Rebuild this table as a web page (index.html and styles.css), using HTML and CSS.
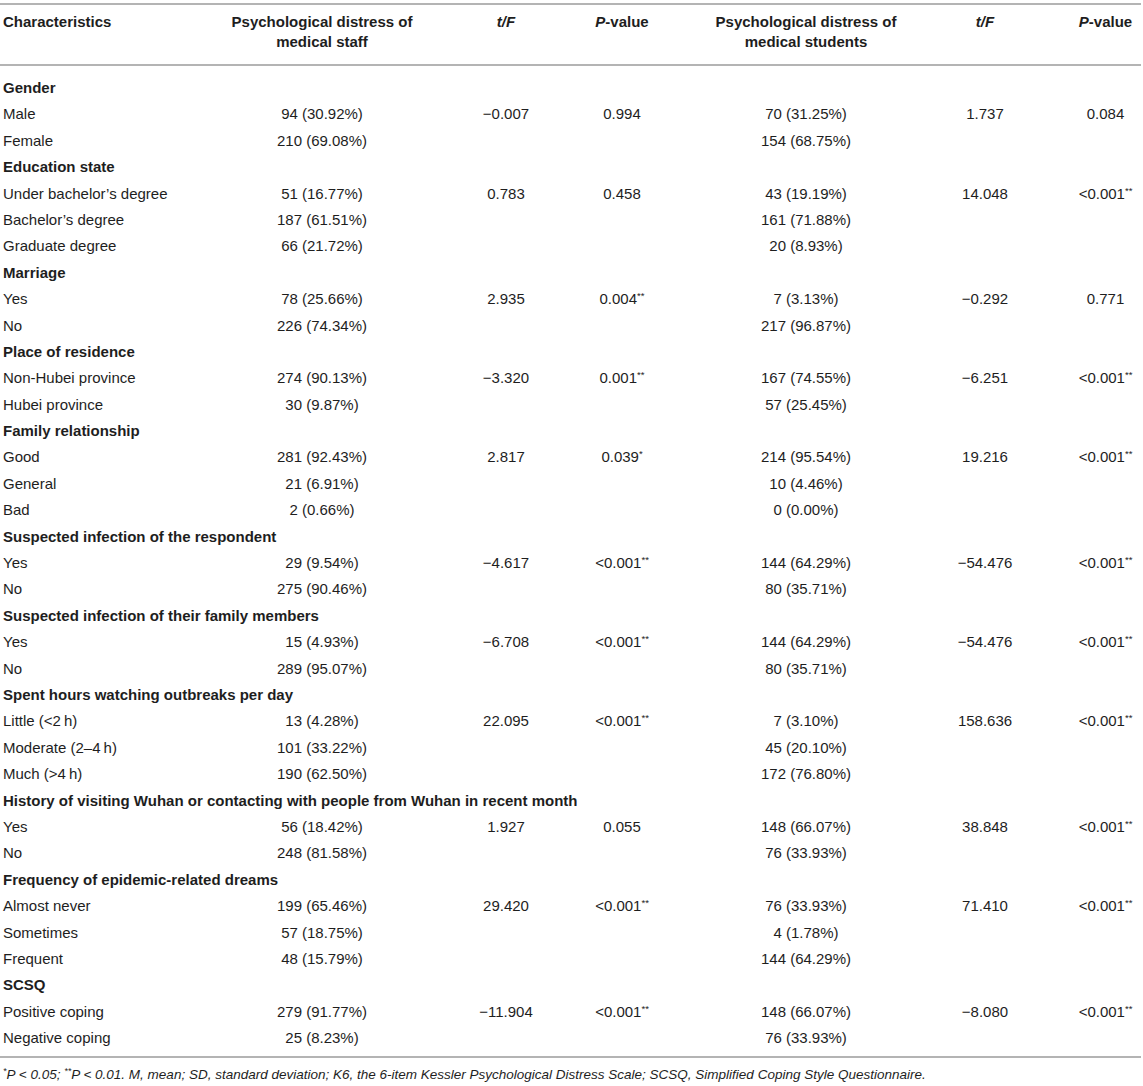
FILE: index.html
```html
<!DOCTYPE html>
<html lang="en">
<head>
<meta charset="utf-8">
<title>Psychological distress table</title>
<link rel="stylesheet" href="styles.css">
</head>
<body>
<div class="tbl" role="table">
  <div class="head row" role="row">
    <div class="c1">Characteristics</div>
    <div class="c2">Psychological distress of<br>medical staff</div>
    <div class="c3"><i>t/F</i></div>
    <div class="c4"><i>P</i>-value</div>
    <div class="c5">Psychological distress of<br>medical students</div>
    <div class="c6"><i>t/F</i></div>
    <div class="c7"><i>P</i>-value</div>
  </div>
  <div class="body">
    <div class="group">Gender</div>
    <div class="row"><div class="c1">Male</div><div class="c2">94 (30.92%)</div><div class="c3">−0.007</div><div class="c4">0.994</div><div class="c5">70 (31.25%)</div><div class="c6">1.737</div><div class="c7">0.084</div></div>
    <div class="row"><div class="c1">Female</div><div class="c2">210 (69.08%)</div><div class="c3"></div><div class="c4"></div><div class="c5">154 (68.75%)</div></div>

    <div class="group">Education state</div>
    <div class="row"><div class="c1">Under bachelor’s degree</div><div class="c2">51 (16.77%)</div><div class="c3">0.783</div><div class="c4">0.458</div><div class="c5">43 (19.19%)</div><div class="c6">14.048</div><div class="c7">&lt;0.001<sup>**</sup></div></div>
    <div class="row"><div class="c1">Bachelor’s degree</div><div class="c2">187 (61.51%)</div><div class="c3"></div><div class="c4"></div><div class="c5">161 (71.88%)</div></div>
    <div class="row"><div class="c1">Graduate degree</div><div class="c2">66 (21.72%)</div><div class="c3"></div><div class="c4"></div><div class="c5">20 (8.93%)</div></div>

    <div class="group">Marriage</div>
    <div class="row"><div class="c1">Yes</div><div class="c2">78 (25.66%)</div><div class="c3">2.935</div><div class="c4">0.004<sup>**</sup></div><div class="c5">7 (3.13%)</div><div class="c6">−0.292</div><div class="c7">0.771</div></div>
    <div class="row"><div class="c1">No</div><div class="c2">226 (74.34%)</div><div class="c3"></div><div class="c4"></div><div class="c5">217 (96.87%)</div></div>

    <div class="group">Place of residence</div>
    <div class="row"><div class="c1">Non-Hubei province</div><div class="c2">274 (90.13%)</div><div class="c3">−3.320</div><div class="c4">0.001<sup>**</sup></div><div class="c5">167 (74.55%)</div><div class="c6">−6.251</div><div class="c7">&lt;0.001<sup>**</sup></div></div>
    <div class="row"><div class="c1">Hubei province</div><div class="c2">30 (9.87%)</div><div class="c3"></div><div class="c4"></div><div class="c5">57 (25.45%)</div></div>

    <div class="group">Family relationship</div>
    <div class="row"><div class="c1">Good</div><div class="c2">281 (92.43%)</div><div class="c3">2.817</div><div class="c4">0.039<sup>*</sup></div><div class="c5">214 (95.54%)</div><div class="c6">19.216</div><div class="c7">&lt;0.001<sup>**</sup></div></div>
    <div class="row"><div class="c1">General</div><div class="c2">21 (6.91%)</div><div class="c3"></div><div class="c4"></div><div class="c5">10 (4.46%)</div></div>
    <div class="row"><div class="c1">Bad</div><div class="c2">2 (0.66%)</div><div class="c3"></div><div class="c4"></div><div class="c5">0 (0.00%)</div></div>

    <div class="group">Suspected infection of the respondent</div>
    <div class="row"><div class="c1">Yes</div><div class="c2">29 (9.54%)</div><div class="c3">−4.617</div><div class="c4">&lt;0.001<sup>**</sup></div><div class="c5">144 (64.29%)</div><div class="c6">−54.476</div><div class="c7">&lt;0.001<sup>**</sup></div></div>
    <div class="row"><div class="c1">No</div><div class="c2">275 (90.46%)</div><div class="c3"></div><div class="c4"></div><div class="c5">80 (35.71%)</div></div>

    <div class="group">Suspected infection of their family members</div>
    <div class="row"><div class="c1">Yes</div><div class="c2">15 (4.93%)</div><div class="c3">−6.708</div><div class="c4">&lt;0.001<sup>**</sup></div><div class="c5">144 (64.29%)</div><div class="c6">−54.476</div><div class="c7">&lt;0.001<sup>**</sup></div></div>
    <div class="row"><div class="c1">No</div><div class="c2">289 (95.07%)</div><div class="c3"></div><div class="c4"></div><div class="c5">80 (35.71%)</div></div>

    <div class="group">Spent hours watching outbreaks per day</div>
    <div class="row"><div class="c1">Little (&lt;2&#8201;h)</div><div class="c2">13 (4.28%)</div><div class="c3">22.095</div><div class="c4">&lt;0.001<sup>**</sup></div><div class="c5">7 (3.10%)</div><div class="c6">158.636</div><div class="c7">&lt;0.001<sup>**</sup></div></div>
    <div class="row"><div class="c1">Moderate (2–4&#8201;h)</div><div class="c2">101 (33.22%)</div><div class="c3"></div><div class="c4"></div><div class="c5">45 (20.10%)</div></div>
    <div class="row"><div class="c1">Much (&gt;4&#8201;h)</div><div class="c2">190 (62.50%)</div><div class="c3"></div><div class="c4"></div><div class="c5">172 (76.80%)</div></div>

    <div class="group">History of visiting Wuhan or contacting with people from Wuhan in recent month</div>
    <div class="row"><div class="c1">Yes</div><div class="c2">56 (18.42%)</div><div class="c3">1.927</div><div class="c4">0.055</div><div class="c5">148 (66.07%)</div><div class="c6">38.848</div><div class="c7">&lt;0.001<sup>**</sup></div></div>
    <div class="row"><div class="c1">No</div><div class="c2">248 (81.58%)</div><div class="c3"></div><div class="c4"></div><div class="c5">76 (33.93%)</div></div>

    <div class="group">Frequency of epidemic-related dreams</div>
    <div class="row"><div class="c1">Almost never</div><div class="c2">199 (65.46%)</div><div class="c3">29.420</div><div class="c4">&lt;0.001<sup>**</sup></div><div class="c5">76 (33.93%)</div><div class="c6">71.410</div><div class="c7">&lt;0.001<sup>**</sup></div></div>
    <div class="row"><div class="c1">Sometimes</div><div class="c2">57 (18.75%)</div><div class="c3"></div><div class="c4"></div><div class="c5">4 (1.78%)</div></div>
    <div class="row"><div class="c1">Frequent</div><div class="c2">48 (15.79%)</div><div class="c3"></div><div class="c4"></div><div class="c5">144 (64.29%)</div></div>

    <div class="group">SCSQ</div>
    <div class="row"><div class="c1">Positive coping</div><div class="c2">279 (91.77%)</div><div class="c3">−11.904</div><div class="c4">&lt;0.001<sup>**</sup></div><div class="c5">148 (66.07%)</div><div class="c6">−8.080</div><div class="c7">&lt;0.001<sup>**</sup></div></div>
    <div class="row"><div class="c1">Negative coping</div><div class="c2">25 (8.23%)</div><div class="c3"></div><div class="c4"></div><div class="c5">76 (33.93%)</div></div>
  </div>
  <p class="note"><sup>*</sup>P &lt; 0.05; <sup>**</sup>P &lt; 0.01. M, mean; SD, standard deviation; K6, the 6-item Kessler Psychological Distress Scale; SCSQ, Simplified Coping Style Questionnaire.</p>
</div>
</body>
</html>
```

FILE: styles.css
```css
html, body {
  margin: 0;
  padding: 0;
  background: #ffffff;
}

body {
  font-family: "Liberation Sans", Arial, Helvetica, sans-serif;
  font-size: 15px;
  color: #1e1e1e;
}

.tbl {
  width: 1141px;
  margin-top: 3px;
}

.row {
  display: grid;
  grid-template-columns: 196px 252px 116px 116px 252px 106px 103px;
  height: 26.4px;
  line-height: 26.4px;
  white-space: nowrap;
}

.row > div {
  text-align: center;
}

.row > .c1 {
  text-align: left;
  padding-left: 3px;
}

.row > .c7 {
  padding-left: 32px;
}

.head {
  height: auto;
  line-height: 20px;
  font-weight: bold;
  border-top: 2px solid #b4b4b4;
  border-bottom: 2px solid #b4b4b4;
  padding: 7px 0 12px;
}

.body {
  padding: 9px 0 5px;
  border-bottom: 2px solid #b4b4b4;
}

.group {
  height: 26.4px;
  line-height: 26.4px;
  padding-left: 3px;
  font-weight: bold;
  white-space: nowrap;
}

sup {
  font-size: 9.5px;
  line-height: 0;
  vertical-align: 5px;
}

.note {
  margin: 8px 0 0;
  padding-left: 3px;
  font-size: 13.5px;
  line-height: 17px;
  font-style: italic;
  white-space: nowrap;
}

.note sup {
  font-size: 9px;
}
```
